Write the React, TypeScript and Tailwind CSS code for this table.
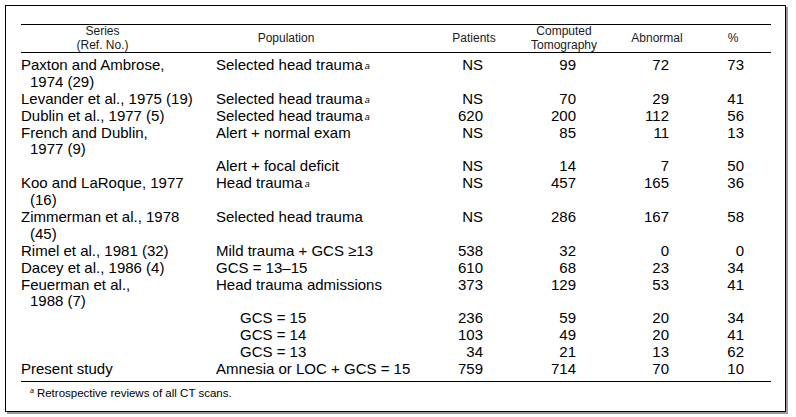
import React from "react";

type Row = {
  s?: string;
  s2?: boolean;
  p?: string;
  sup?: boolean;
  indent?: boolean;
  v?: [string, string, string, string];
};

const rows: Row[] = [
  { s: "Paxton and Ambrose,", p: "Selected head trauma", sup: true, v: ["NS", "99", "72", "73"] },
  { s: "1974 (29)", s2: true },
  { s: "Levander et al., 1975 (19)", p: "Selected head trauma", sup: true, v: ["NS", "70", "29", "41"] },
  { s: "Dublin et al., 1977 (5)", p: "Selected head trauma", sup: true, v: ["620", "200", "112", "56"] },
  { s: "French and Dublin,", p: "Alert + normal exam", v: ["NS", "85", "11", "13"] },
  { s: "1977 (9)", s2: true },
  { p: "Alert + focal deficit", v: ["NS", "14", "7", "50"] },
  { s: "Koo and LaRoque, 1977", p: "Head trauma", sup: true, v: ["NS", "457", "165", "36"] },
  { s: "(16)", s2: true },
  { s: "Zimmerman et al., 1978", p: "Selected head trauma", v: ["NS", "286", "167", "58"] },
  { s: "(45)", s2: true },
  { s: "Rimel et al., 1981 (32)", p: "Mild trauma + GCS \u226513", v: ["538", "32", "0", "0"] },
  { s: "Dacey et al., 1986 (4)", p: "GCS = 13\u201315", v: ["610", "68", "23", "34"] },
  { s: "Feuerman et al.,", p: "Head trauma admissions", v: ["373", "129", "53", "41"] },
  { s: "1988 (7)", s2: true },
  { p: "GCS = 15", indent: true, v: ["236", "59", "20", "34"] },
  { p: "GCS = 14", indent: true, v: ["103", "49", "20", "41"] },
  { p: "GCS = 13", indent: true, v: ["34", "21", "13", "62"] },
  { s: "Present study", p: "Amnesia or LOC + GCS = 15", v: ["759", "714", "70", "10"] },
];

const numPad = ["pr-[26px]", "pr-[43px]", "pr-[26px]", "pr-[27px]"];

function Sup() {
  return <sup className="text-[9px] italic ml-[2px] relative top-[-1px]">a</sup>;
}

export default function App() {
  return (
    <div
      className="w-[796px] h-[417px] bg-white pt-[5px] pl-[5px]"
      style={{ fontFamily: "'Liberation Sans', Arial, sans-serif" }}
    >
      <div className="w-[781px] h-[407px] border-[1.5px] border-black shadow-[2px_2px_0_#9a9a9a] pl-[15px] pt-[18px] text-black">
        <div className="w-[750px]">
          <div className="border-t-[1.5px] border-black" />
          <div className="grid grid-cols-[195px_223px_70px_110px_76px_76px] items-center text-[12px] leading-[13.5px] text-[#1a1a1a] h-[27px]">
            <div className="text-center pr-[32px]">
              Series
              <br />
              (Ref. No.)
            </div>
            <div className="text-center pr-[83px]">Population</div>
            <div className="text-center">Patients</div>
            <div className="text-center">
              Computed
              <br />
              Tomography
            </div>
            <div className="text-center">Abnormal</div>
            <div className="text-center">%</div>
          </div>
          <div className="border-t border-black" />
          <div className="pt-[3px] text-[15px] leading-[17px]">
            {rows.map((r, i) => (
              <div key={i} className="grid grid-cols-[195px_223px_70px_110px_76px_76px] h-[16.9px] whitespace-nowrap">
                <div className={r.s2 ? "pl-[9px]" : ""}>{r.s ?? ""}</div>
                <div className={r.indent ? "pl-[24px]" : ""}>
                  {r.p ?? ""}
                  {r.sup ? <Sup /> : null}
                </div>
                {[0, 1, 2, 3].map((k) => (
                  <div key={k} className={"text-right " + numPad[k]}>
                    {r.v ? r.v[k] : ""}
                  </div>
                ))}
              </div>
            ))}
          </div>
          <div className="mt-[4px] border-t border-black" />
          <div className="pl-[9px] pt-[4px] text-[11.5px] leading-[14px]">
            <sup className="text-[7px] italic mr-[3px]">a</sup>Retrospective reviews of all CT scans.
          </div>
        </div>
      </div>
    </div>
  );
}
